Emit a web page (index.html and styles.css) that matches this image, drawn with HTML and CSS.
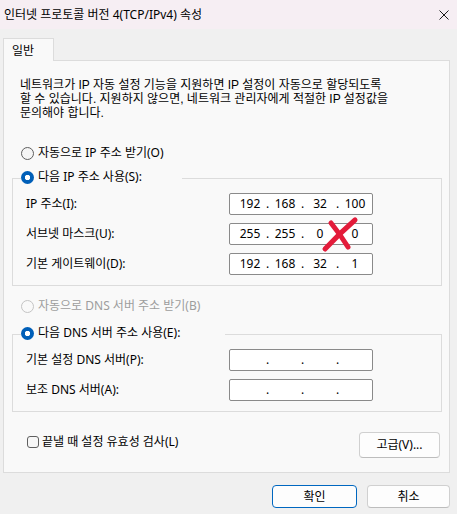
FILE: index.html
```html
<!DOCTYPE html>
<html lang="ko">
<head>
<meta charset="utf-8">
<title>인터넷 프로토콜 버전 4(TCP/IPv4) 속성</title>
<link rel="stylesheet" href="styles.css">
</head>
<body>
<header class="titlebar">
  <span class="title">인터넷 프로토콜 버전 4(TCP/IPv4) 속성</span>
  <svg class="close" width="10" height="10" viewBox="0 0 10 10"><path d="M0.5 0.5L9.5 9.5M9.5 0.5L0.5 9.5" stroke="#1a1a1a" stroke-width="1" fill="none"/></svg>
</header>
<main class="body">
  <div class="tabs"><div class="tab">일반</div></div>
  <section class="panel">
    <p class="desc">네트워크가 IP 자동 설정 기능을 지원하면 IP 설정이 자동으로 할당되도록<br>할 수 있습니다. 지원하지 않으면, 네트워크 관리자에게 적절한 IP 설정값을<br>문의해야 합니다.</p>

    <div class="radio-row first"><span class="radio"></span><span>자동으로 IP 주소 받기(O)</span></div>

    <fieldset class="group">
      <legend class="legend legend-ip"><span class="radio checked"></span><span>다음 IP 주소 사용(S):</span></legend>
      <div class="fields">
        <span class="label">IP 주소(I):</span>
        <div class="ipfield"><span>192</span><span>.</span><span>168</span><span>.</span><span>32</span><span>.</span><span>100</span></div>
        <span class="label">서브넷 마스크(U):</span>
        <div class="ipfield"><span>255</span><span>.</span><span>255</span><span>.</span><span>0</span><span>.</span><span>0</span>
          <svg class="mark" width="38" height="37" viewBox="0 0 38 37"><path d="M34 4 Q19 17 4 33" stroke="#e31b3a" stroke-width="5" stroke-linecap="round" fill="none"/><path d="M10 7 Q19 18 27 31" stroke="#e31b3a" stroke-width="5" stroke-linecap="round" fill="none"/></svg>
        </div>
        <span class="label">기본 게이트웨이(D):</span>
        <div class="ipfield"><span>192</span><span>.</span><span>168</span><span>.</span><span>32</span><span>.</span><span>1</span></div>
      </div>
    </fieldset>

    <div class="radio-row second disabled-text"><span class="radio disabled"></span><span>자동으로 DNS 서버 주소 받기(B)</span></div>

    <fieldset class="group group-dns">
      <legend class="legend legend-dns"><span class="radio checked"></span><span>다음 DNS 서버 주소 사용(E):</span></legend>
      <div class="fields">
        <span class="label">기본 설정 DNS 서버(P):</span>
        <div class="ipfield"><span></span><span>.</span><span></span><span>.</span><span></span><span>.</span><span></span></div>
        <span class="label">보조 DNS 서버(A):</span>
        <div class="ipfield"><span></span><span>.</span><span></span><span>.</span><span></span><span>.</span><span></span></div>
      </div>
    </fieldset>

    <div class="options">
      <div class="check"><span class="checkbox"></span><span>끝낼 때 설정 유효성 검사(L)</span></div>
      <button class="btn btn-adv">고급(V)...</button>
    </div>
  </section>
  <div class="footer">
    <button class="btn btn-ok">확인</button>
    <button class="btn btn-cancel">취소</button>
  </div>
</main>
</body>
</html>
```
FILE: styles.css
```css
* { box-sizing: border-box; }
html, body { margin: 0; padding: 0; }
body {
  width: 457px;
  height: 514px;
  overflow: hidden;
  background: #f0f0f0;
  font-family: "Noto Sans", "Noto Sans CJK KR", sans-serif;
  font-size: 12px;
  color: #000;
}
.titlebar {
  height: 29px;
  background: #f6eef3;
  display: flex;
  align-items: center;
  justify-content: space-between;
  padding: 0 8px 0 4px;
}
.title { line-height: 14px; white-space: nowrap; }
.close { display: block; }

.body { padding: 9px 7px 0 3px; }
.tabs { display: flex; }
.tab {
  position: relative;
  z-index: 1;
  width: 51px;
  height: 23px;
  margin-bottom: -1px;
  padding: 5px 0 0 8px;
  line-height: 14px;
  background: #f9f9f9;
  border: 1px solid #dcdcdc;
  border-bottom: 0;
}
.panel {
  background: #f9f9f9;
  border: 1px solid #dcdcdc;
  padding: 17px 7px 14px 8px;
}
.desc {
  margin: 0 0 0 8px;
  font-family: "Liberation Sans", "Noto Sans CJK KR", sans-serif;
  line-height: 14px;
  white-space: nowrap;
}
.radio-row {
  display: flex;
  align-items: center;
  gap: 4px;
  height: 16px;
  line-height: 14px;
  margin-left: 9px;
  white-space: nowrap;
}
.radio-row.first { margin-top: 25px; }
.radio-row.second { margin-top: 12px; }
.disabled-text { color: #9d9d9d; }

.radio {
  flex: none;
  width: 13px;
  height: 13px;
  border-radius: 50%;
  border: 1px solid #5f5f5f;
  background: #f5f5f5;
}
.radio.checked {
  border: 0;
  background: radial-gradient(circle, #fff 0 2.4px, #005fb8 3px);
}
.radio.disabled {
  border-color: #c4c4c4;
  background: #f9f9f9;
}

.group {
  margin: 9px 0 0;
  padding: 7px 0 10px 13px;
  border: 1px solid #dcdcdc;
  min-width: 0;
}
.group-dns { margin-top: 12px; }
.legend {
  display: flex;
  align-items: flex-start;
  gap: 4px;
  height: 16px;
  line-height: 14px;
  padding: 0;
  margin-left: -5px;
  white-space: nowrap;
}
.legend .radio { margin-top: 1px; }
.legend-ip { width: 161px; }
.legend-dns { width: 204px; }

.fields {
  display: grid;
  grid-template-columns: 203px 144px;
  grid-auto-rows: 22px;
  row-gap: 8px;
  align-items: center;
}
.label { line-height: 14px; white-space: nowrap; }
.ipfield {
  position: relative;
  height: 22px;
  border: 1px solid #8a8a8a;
  border-radius: 2px;
  background: #fff;
  display: grid;
  grid-template-columns: 30px 5px 30px 5px 30px 5px 30px;
  align-items: center;
  padding-left: 5px;
  text-align: center;
  line-height: 14px;
}
.mark {
  position: absolute;
  left: 91px;
  top: -8px;
}

.options {
  display: flex;
  justify-content: space-between;
  align-items: flex-start;
  margin: 20px 2px 0 15px;
}
.check {
  display: flex;
  align-items: center;
  gap: 3px;
  height: 16px;
  margin-top: 2px;
  line-height: 14px;
  white-space: nowrap;
}
.checkbox {
  width: 12px;
  height: 12px;
  border: 1px solid #5f5f5f;
  border-radius: 3px;
  background: #f7f7f7;
}
.btn {
  font: inherit;
  color: #000;
  line-height: 14px;
  padding: 0;
  background: #fdfdfd;
  border: 1px solid #d0d0d0;
  border-bottom-color: #bdbdbd;
  border-radius: 4px;
}
.btn-adv { width: 81px; height: 26px; }

.footer {
  display: flex;
  justify-content: flex-end;
  gap: 10px;
  margin-top: 12px;
}
.btn-ok { width: 85px; height: 23px; border-color: #0067c0; }
.btn-cancel { width: 83px; height: 23px; }
```
